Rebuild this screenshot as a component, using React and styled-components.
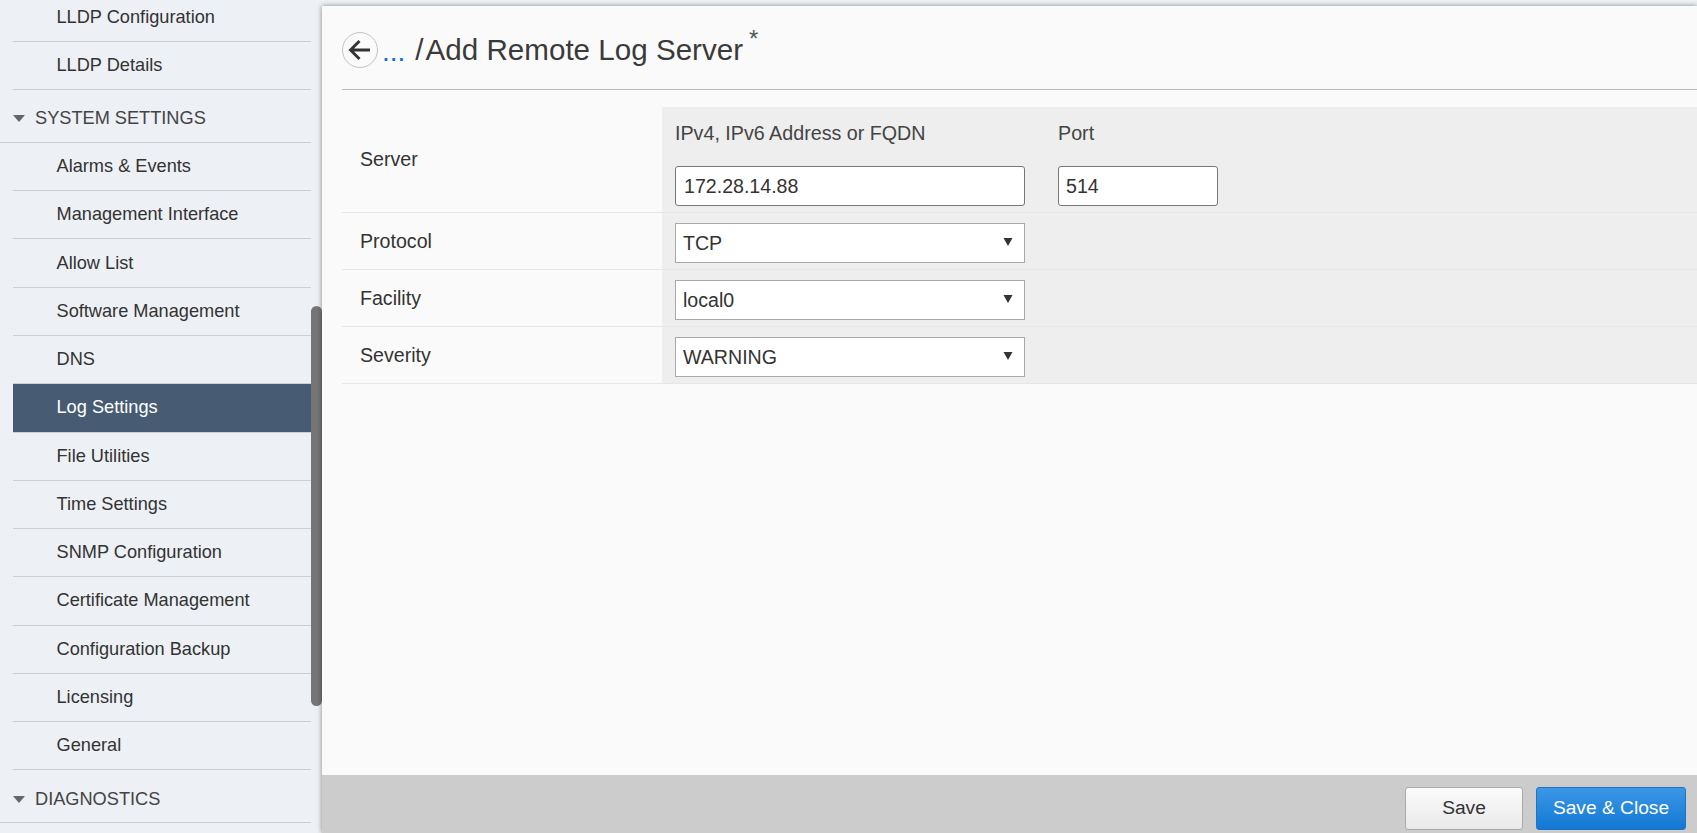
import React from "react";
import styled, { createGlobalStyle } from "styled-components";

const Global = createGlobalStyle`
  html, body { margin: 0; height: 100%; overflow: hidden; background: #edf0f4; }
  body { font-family: "Liberation Sans", Arial, sans-serif; color: #333; }
  #root { height: 100%; }
  * { box-sizing: border-box; }
`;

const Page = styled.div`
  display: flex;
  width: 1697px;
  height: 833px;
  overflow: hidden;
`;

const Sidebar = styled.nav`
  position: relative;
  flex: 0 0 322px;
  height: 833px;
  padding-right: 11px;
  overflow: hidden;
`;

const NavList = styled.div`
  display: flex;
  flex-direction: column;
  margin-top: -6.6px;
`;

const NavItem = styled.div`
  flex: 0 0 48.27px;
  height: 48.27px;
  margin-left: 13px;
  padding-left: 43.5px;
  display: flex;
  align-items: center;
  font-size: 18.2px;
  color: ${(p) => (p.$active ? "#fff" : "#333")};
  background: ${(p) => (p.$active ? "#475b73" : "transparent")};
  border-bottom: 1px solid #ccd1d6;
`;

const NavSection = styled.div`
  flex: 0 0 53px;
  height: 53px;
  padding: 6px 0 0 13px;
  display: flex;
  align-items: center;
  gap: 10px;
  font-size: 18.2px;
  color: #444;
  border-bottom: 1px solid #ccd1d6;
`;

const Scrollbar = styled.div`
  position: absolute;
  left: 311px;
  top: 306px;
  width: 11px;
  height: 400px;
  border-radius: 6px;
  background: #757575;
`;

const Main = styled.main`
  flex: 1;
  margin-top: 6px;
  min-width: 0;
  display: flex;
  flex-direction: column;
  background: #fafafa;
  box-shadow: 0 0 5px rgba(0, 0, 0, 0.45);
  position: relative;
`;

const Content = styled.div`
  flex: 1;
  padding-left: 20px;
`;

const Header = styled.header`
  height: 84px;
  border-bottom: 1px solid #b8b8b8;
  display: flex;
  align-items: flex-start;
  padding-top: 26px;
`;

const BackButton = styled.button`
  flex: 0 0 36px;
  width: 36px;
  height: 36px;
  padding: 0;
  border: 1px solid #c4c4c4;
  border-radius: 50%;
  background: transparent;
  color: #333;
  display: flex;
  align-items: center;
  justify-content: center;
`;

const Crumb = styled.span`
  margin: 3px 0 0 4px;
  font-size: 28px;
  line-height: 33px;
  color: #0f6fd6;
`;

const Title = styled.h1`
  margin: 1px 0 0 10px;
  font-size: 29.6px;
  line-height: 33px;
  font-weight: 400;
  color: #3a3a3a;
`;

const Slash = styled.span`
  margin-right: 2px;
`;

const Star = styled.sup`
  font-size: 24px;
  line-height: 1;
  color: #555;
  margin: -5px 0 0 6px;
  align-self: flex-start;
`;

const Form = styled.div`
  margin-top: 17px;
`;

const Row = styled.div`
  display: flex;
  height: ${(p) => p.$h}px;
  border-bottom: 1px solid #e6e6e6;
`;

const Label = styled.div`
  flex: 0 0 320px;
  padding: 0 0 0 18px;
  display: flex;
  align-items: center;
  font-size: 19.6px;
  color: #333;
`;

const Field = styled.div`
  flex: 1;
  background: #eee;
  padding-left: 13px;
  display: flex;
  align-items: ${(p) => (p.$top ? "flex-start" : "center")};
  gap: 33px;
`;

const Group = styled.div`
  display: flex;
  flex-direction: column;
  width: ${(p) => p.$w}px;
`;

const Caption = styled.label`
  height: 59px;
  padding-top: 15px;
  font-size: 19.7px;
  line-height: 23px;
  color: #444;
`;

const TextInput = styled.input`
  width: 100%;
  height: 40px;
  padding: 0 ${(p) => p.$pad || 8}px;
  border: 1px solid #777;
  border-radius: 3px;
  background: #fff;
  font: 19.6px "Liberation Sans", Arial, sans-serif;
  color: #333;
`;

const SelectWrap = styled.div`
  position: relative;
  width: 350px;
  height: 40px;
  margin-top: 4px;
`;

const Select = styled.select`
  appearance: none;
  width: 100%;
  height: 100%;
  padding: 0 0 0 7px;
  border: 1px solid #a9a9a9;
  border-radius: 0;
  background: #fff;
  font: 19.6px "Liberation Sans", Arial, sans-serif;
  color: #333;
`;

const Caret = styled.svg`
  position: absolute;
  right: 12px;
  top: 14px;
  pointer-events: none;
`;

const Footer = styled.footer`
  flex: 0 0 58px;
  background: #ccc;
  display: flex;
  justify-content: flex-end;
  align-items: flex-start;
  gap: 13px;
  padding: 12px 11px 0 0;
`;

const Button = styled.button`
  width: ${(p) => p.$w}px;
  height: 43px;
  padding: 0 0 2px;
  border-radius: 3px;
  font: 19.2px "Liberation Sans", Arial, sans-serif;
  border: 1px solid ${(p) => (p.$primary ? "#1f74bf" : "#aaa")};
  color: ${(p) => (p.$primary ? "#fff" : "#333")};
  background: ${(p) =>
    p.$primary
      ? "linear-gradient(#3c97e6, #1278d4)"
      : "linear-gradient(#fbfbfb, #e9e9e9)"};
`;

const Triangle = () => (
  <svg width="12" height="7" viewBox="0 0 12 7">
    <path d="M0 0h12L6 7z" fill="#666" />
  </svg>
);

const top = ["LLDP Configuration", "LLDP Details"];
const system = [
  "Alarms & Events",
  "Management Interface",
  "Allow List",
  "Software Management",
  "DNS",
  "Log Settings",
  "File Utilities",
  "Time Settings",
  "SNMP Configuration",
  "Certificate Management",
  "Configuration Backup",
  "Licensing",
  "General",
];

const SelectField = ({ value }) => (
  <SelectWrap>
    <Select defaultValue={value}>
      <option>{value}</option>
    </Select>
    <Caret width="10" height="10" viewBox="0 0 10 10">
      <path d="M.5 1h9L5 9z" fill="#333" />
    </Caret>
  </SelectWrap>
);

export default function App() {
  return (
    <Page>
      <Global />
      <Sidebar>
        <NavList>
          {top.map((t) => (
            <NavItem key={t}>{t}</NavItem>
          ))}
          <NavSection>
            <Triangle />
            SYSTEM SETTINGS
          </NavSection>
          {system.map((t) => (
            <NavItem key={t} $active={t === "Log Settings"}>
              {t}
            </NavItem>
          ))}
          <NavSection>
            <Triangle />
            DIAGNOSTICS
          </NavSection>
        </NavList>
        <Scrollbar />
      </Sidebar>
      <Main>
        <Content>
          <Header>
            <BackButton aria-label="Back">
              <svg width="24" height="24" viewBox="0 0 24 24" fill="none" stroke="#333" strokeWidth="2.9">
                <path d="M22 12H3M11.5 3 2.5 12l9 9" />
              </svg>
            </BackButton>
            <Crumb>...</Crumb>
            <Title>
              <Slash>/</Slash>Add Remote Log Server
            </Title>
            <Star>*</Star>
          </Header>
          <Form>
            <Row $h={106}>
              <Label>Server</Label>
              <Field $top>
                <Group $w={350}>
                  <Caption>IPv4, IPv6 Address or FQDN</Caption>
                  <TextInput defaultValue="172.28.14.88" />
                </Group>
                <Group $w={160}>
                  <Caption>Port</Caption>
                  <TextInput defaultValue="514" $pad={7} />
                </Group>
              </Field>
            </Row>
            <Row $h={57}>
              <Label>Protocol</Label>
              <Field>
                <SelectField value="TCP" />
              </Field>
            </Row>
            <Row $h={57}>
              <Label>Facility</Label>
              <Field>
                <SelectField value="local0" />
              </Field>
            </Row>
            <Row $h={57}>
              <Label>Severity</Label>
              <Field>
                <SelectField value="WARNING" />
              </Field>
            </Row>
          </Form>
        </Content>
        <Footer>
          <Button $w={118}>Save</Button>
          <Button $w={150} $primary>
            Save &amp; Close
          </Button>
        </Footer>
      </Main>
    </Page>
  );
}
